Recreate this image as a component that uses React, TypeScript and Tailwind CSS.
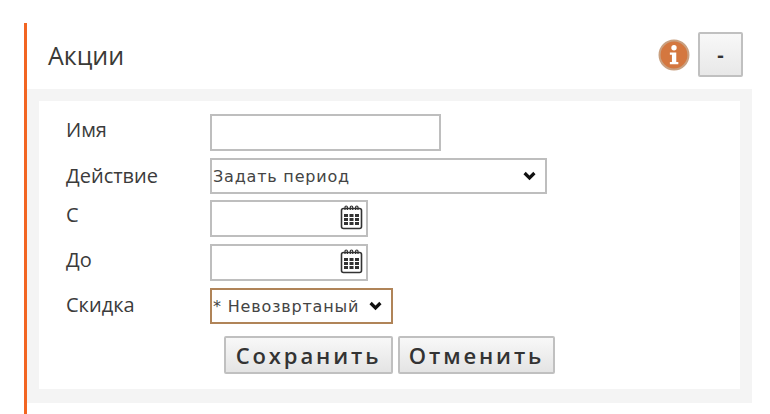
import React from "react";

function Chevron() {
  return (
    <svg width="13" height="10" viewBox="0 0 13 10" className="pointer-events-none absolute right-[11px] top-[13px]">
      <path d="M1.6 2 L6.5 6.9 L11.4 2" fill="none" stroke="#111" strokeWidth="3.2" />
    </svg>
  );
}

function CalendarIcon() {
  return (
    <svg width="23" height="25" viewBox="0 0 23 25" className="pointer-events-none absolute right-[5px] top-[5px]">
      <rect x="1.5" y="3.5" width="20" height="20" rx="2" fill="#fff" stroke="#333" strokeWidth="1.6" />
      <path d="M5 5V2.2a1 1 0 0 1 2.4 0V5M10.3 5V2.2a1 1 0 0 1 2.4 0V5M15.6 5V2.2a1 1 0 0 1 2.4 0V5" fill="none" stroke="#333" strokeWidth="1.2" />
      <path d="M4 9h4v3H4zM9.5 9h4v3h-4zM15 9h4v3h-4zM4 13h4v3H4zM9.5 13h4v3h-4zM15 13h4v3h-4zM4 17h4v3H4zM9.5 17h4v3h-4zM15 17h4v3h-4z" fill="#333" />
    </svg>
  );
}

function InfoIcon() {
  return (
    <svg width="32" height="32" viewBox="0 0 31 31">
      <circle cx="15.5" cy="15.5" r="14" fill="#d4773f" stroke="#c9a080" strokeWidth="2" />
      <circle cx="15.5" cy="8.5" r="2.6" fill="#fff" />
      <path d="M11.5 13h6.2v9.2h2v2.3h-8.2v-2.3h2v-6.9h-2z" fill="#fff" />
    </svg>
  );
}

function Row({ label, mt, labelClass, children }: { label: string; mt: string; labelClass: string; children: React.ReactNode }) {
  return (
    <div className={`flex items-center ${mt}`}>
      <label className={`w-[144px] text-[20px] leading-none text-[#3b3b3b] ${labelClass}`}>{label}</label>
      {children}
    </div>
  );
}

function DateInput() {
  return (
    <div className="relative">
      <input type="text" className="block h-[37px] w-[158px] border-2 border-[#bebebe] bg-white" />
      <CalendarIcon />
    </div>
  );
}

function Select({ value, className }: { value: string; className: string }) {
  return (
    <div className="relative">
      <select
        defaultValue={value}
        className={`block h-[36px] appearance-none border-2 bg-white pl-[1px] pt-[2px] font-['DejaVu_Sans',sans-serif] text-[16px] tracking-[0.8px] text-[#444] ${className}`}
      >
        <option>{value}</option>
      </select>
      <Chevron />
    </div>
  );
}

const buttonClass =
  "h-[38px] rounded-[2px] border-2 border-[#c0c0c0] bg-gradient-to-b from-[#f8f8f8] to-[#e4e4e4] text-[22px] font-semibold tracking-[2.9px] text-[#333]";

export default function App() {
  return (
    <div className="h-[414px] w-[770px] overflow-hidden bg-white pl-[24px] pt-[23px] font-['Open_Sans',sans-serif]">
      <div className="h-[391px] w-[728px] border-l-[3px] border-[#f26522]">
        <div className="flex h-[66px] items-center justify-between pb-[3px] pl-[21px] pr-[9px]">
          <h2 className="pt-[3px] text-[25px] text-[#3a3a36]">Акции</h2>
          <div className="flex items-center gap-[8px]">
            <InfoIcon />
            <button className="h-[45px] w-[45px] rounded-[2px] border-2 border-[#c0c0c0] bg-gradient-to-b from-[#f8f8f8] to-[#e8e8e8] text-[20px] font-bold text-[#333]">
              -
            </button>
          </div>
        </div>
        <div className="w-[725px] bg-[#f4f4f4] p-[12px] pb-[14px]">
          <div className="h-[288px] w-[701px] bg-white pl-[27px] pt-[13px]">
            <Row label="Имя" mt="" labelClass="pb-[6px]">
              <input type="text" className="block h-[37px] w-[231px] border-2 border-[#bebebe] bg-white" />
            </Row>
            <Row label="Действие" mt="mt-[7px]" labelClass="">
              <Select value="Задать период" className="w-[337px] border-[#bebebe]" />
            </Row>
            <Row label="С" mt="mt-[6px]" labelClass="pb-[7px]">
              <DateInput />
            </Row>
            <Row label="До" mt="mt-[7px]" labelClass="pb-[6px]">
              <DateInput />
            </Row>
            <Row label="Скидка" mt="mt-[7px]" labelClass="pb-[2px]">
              <Select value="* Невозвртаный" className="w-[183px] border-[#b08458]" />
            </Row>
            <div className="mt-[12px] flex gap-[5px] pl-[158px]">
              <button className={`${buttonClass} w-[169px]`}>Сохранить</button>
              <button className={`${buttonClass} w-[157px]`}>Отменить</button>
            </div>
          </div>
        </div>
      </div>
    </div>
  );
}
